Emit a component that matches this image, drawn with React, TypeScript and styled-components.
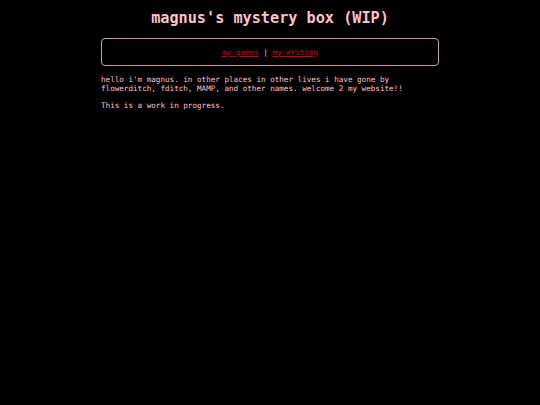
import React from "react";
import styled, { createGlobalStyle } from "styled-components";

const GlobalStyle = createGlobalStyle`
  html, body {
    margin: 0;
    padding: 0;
    background: #000;
  }
  body {
    font-family: "DejaVu Sans Mono", "Liberation Mono", monospace;
    color: pink;
  }
`;

const Page = styled.div`
  width: 338px;
  margin: 0 auto;
  padding-top: 9px;
`;

const Title = styled.h1`
  margin: 0 0 11px;
  font-size: 15.2px;
  line-height: 18px;
  font-weight: bold;
  text-align: center;
  color: pink;
`;

const Nav = styled.nav`
  box-sizing: border-box;
  height: 28px;
  border: 1px solid #c99ca3;
  border-radius: 4px;
  display: flex;
  align-items: center;
  justify-content: center;
  font-size: 7.6px;
  gap: 4.6px;
`;

const NavLink = styled.a`
  color: #d00000;
  text-decoration: underline;
`;

const Sep = styled.span`
  color: pink;
`;

const Body = styled.div`
  padding-top: 1px;
  font-size: 7.6px;
`;

const Para = styled.p`
  margin: 8px 0;
`;

const App: React.FC = () => {
  return (
    <>
      <GlobalStyle />
      <Page>
        <Title>magnus's mystery box (WIP)</Title>
        <Nav>
          <NavLink href="#">my games</NavLink>
          <Sep>|</Sep>
          <NavLink href="#">my writing</NavLink>
        </Nav>
        <Body>
          <Para>
            hello i'm magnus. in other places in other lives i have gone by
            flowerditch, fditch, MAMP, and other names. welcome 2 my website!!
          </Para>
          <Para>This is a work in progress.</Para>
        </Body>
      </Page>
    </>
  );
};

export default App;
